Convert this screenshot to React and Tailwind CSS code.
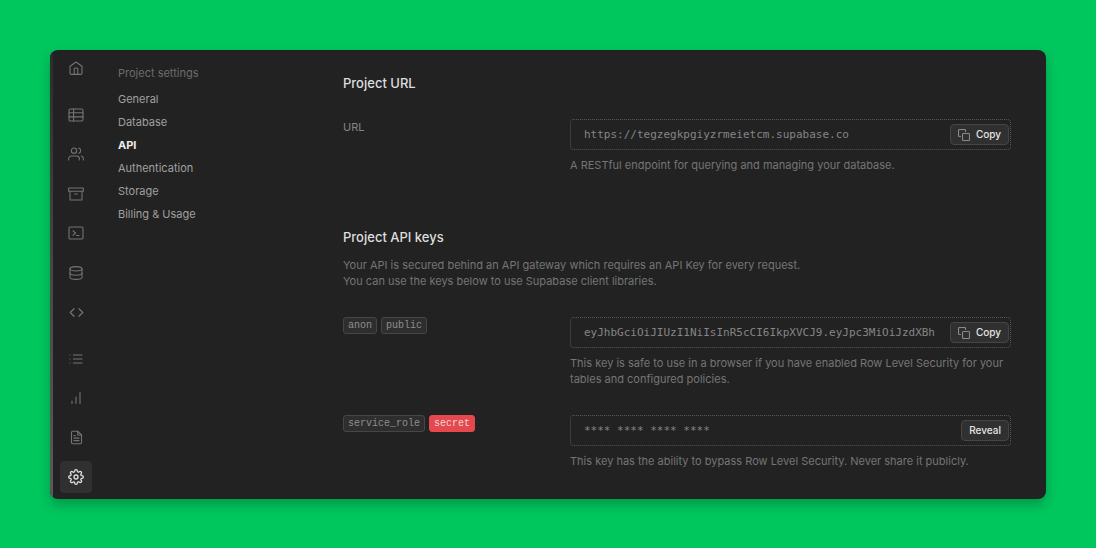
import React from "react";
import { FiArchive, FiCode, FiFileText, FiList, FiSettings, FiUsers } from "react-icons/fi";

const stroke = {
  width: 16,
  height: 16,
  viewBox: "0 0 16 16",
  fill: "none",
  stroke: "currentColor",
  strokeWidth: 1.1,
  strokeLinecap: "round",
  strokeLinejoin: "round",
  "aria-hidden": true,
};

const HomeIcon = () => (
  <svg {...stroke}>
    <path d="M2 6.300 8 2l6 4.300v6.900a1.200 1.200 0 0 1-1.200 1.200H3.200A1.200 1.200 0 0 1 2 13.200Z" />
    <path d="M6.200 14.400V9a1 1 0 0 1 1-1h1.600a1 1 0 0 1 1 1v5.400" />
  </svg>
);

const TableIcon = () => (
  <svg {...stroke}>
    <rect x="1" y="2" width="14" height="12" rx="1.2" />
    <path d="M1 5.800h14M1 9.900h14M5.600 2v12" />
  </svg>
);

const TerminalIcon = () => (
  <svg {...stroke}>
    <rect x="1" y="2" width="14" height="12" rx="1.2" />
    <path d="M5 5.800 7.500 8 5 10.300M8.500 10.500h2.500" />
  </svg>
);

const DatabaseIcon = () => (
  <svg {...stroke}>
    <ellipse cx="8" cy="3.800" rx="6" ry="2.200" />
    <path d="M2 3.800v8.400c0 1.200 2.700 2.200 6 2.200s6-1 6-2.200V3.800" />
    <path d="M2 8c0 1.200 2.700 2.200 6 2.200s6-1 6-2.200" />
  </svg>
);

const ChartIcon = () => (
  <svg {...stroke}>
    <path d="M4 13.500v-2.500M8 13.500V7M12 13.500V2.500" />
  </svg>
);

const CopyIcon = () => (
  <svg {...stroke} width="12" height="12" viewBox="0 0 12 12">
    <rect x="4.500" y="4.500" width="7" height="7" rx="1" />
    <path d="M2.500 7.500h-1a1 1 0 0 1-1-1v-5a1 1 0 0 1 1-1h5a1 1 0 0 1 1 1v1" />
  </svg>
);

const NAV = [
  { name: "Home", icon: <HomeIcon /> },
  { name: "Table editor", icon: <TableIcon />, first: true },
  { name: "Authentication", icon: <FiUsers size={16} strokeWidth={1.6} /> },
  { name: "Storage", icon: <FiArchive size={16} strokeWidth={1.6} /> },
  { name: "SQL editor", icon: <TerminalIcon /> },
  { name: "Database", icon: <DatabaseIcon /> },
  { name: "Functions", icon: <FiCode size={15} strokeWidth={1.9} /> },
  { name: "Logs", icon: <FiList size={16} strokeWidth={1.6} />, first: true },
  { name: "Reports", icon: <ChartIcon /> },
  { name: "API docs", icon: <FiFileText size={15} strokeWidth={1.8} /> },
  { name: "Settings", icon: <FiSettings size={16} strokeWidth={2} />, active: true },
];

const MENU = ["General", "Database", "API", "Authentication", "Storage", "Billing & Usage"];

function Tag({ children, danger }) {
  return (
    <code
      className={
        "rounded-[3px] border px-1 font-['Liberation_Mono',monospace] text-[10px] leading-[15px] " +
        (danger
          ? "border-[#e5484d] bg-[#e5484d] text-[#f3d6d6]"
          : "border-[#464646] bg-[#2e2e2e] text-[#8e8e8e]")
      }
    >
      {children}
    </code>
  );
}

function Field({ id, label, value, help, action, copy }) {
  return (
    <div className="flex items-start">
      <label htmlFor={id} className="flex w-[227px] shrink-0 gap-1">
        {label}
      </label>
      <div className="min-w-0 flex-1">
        <div className="flex h-[31px] items-center rounded-[4px] border border-dotted border-[#585858] pr-px pl-[13px]">
          <input
            id={id}
            readOnly
            value={value}
            className="min-w-0 flex-1 bg-transparent font-['DejaVu_Sans_Mono',monospace] text-[11px] leading-4 text-[#858585] outline-none"
          />
          <button
            type="button"
            className="flex h-[21px] items-center gap-[6px] rounded-[4px] border border-[#454545] bg-[#303030] px-[7px] text-[10px] font-medium text-[#e4e4e4]"
          >
            {copy && (
              <span className="text-[#8a8a8a]">
                <CopyIcon />
              </span>
            )}
            {action}
          </button>
        </div>
        <p className="mt-[7px] text-[11px] leading-4 text-[#757575]">{help}</p>
      </div>
    </div>
  );
}

export default function App() {
  return (
    <div className="min-h-screen bg-[#00c65e] p-[50px] font-[Inter,sans-serif]">
      <div className="flex overflow-hidden rounded-lg bg-[#222222] shadow-[0_6px_12px_rgba(0,0,0,0.22)]">
        <div className="w-[3px] shrink-0 bg-linear-to-b from-[#2c2c2c] via-[#484848] to-[#5a5a5a]" />
        <nav className="flex flex-col justify-between px-[7px] pt-[2px] pb-[6px]">
          {NAV.map((item) => (
            <a
              key={item.name}
              href="#"
              aria-label={item.name}
              className={
                "flex size-8 items-center justify-center rounded-[4px] " +
                (item.active ? "bg-[#303030] text-[#dedede] " : "text-[#747474] ") +
                (item.first ? "mt-[7px]" : "")
              }
            >
              {item.icon}
            </a>
          ))}
        </nav>
        <aside className="w-[244px] shrink-0 pt-3 pl-[19px] text-[11px] leading-[23px] text-[#a0a0a0]">
          <h2 className="mb-[3px] text-[#6c6c6c]">Project settings</h2>
          <ul>
            {MENU.map((name) => (
              <li key={name}>
                <a href="#" className={name === "API" ? "font-bold text-[#ededed]" : ""}>
                  {name}
                </a>
              </li>
            ))}
          </ul>
        </aside>
        <main className="min-w-0 flex-1 pt-[23px] pr-[35px] pb-[30px]">
          <h3 className="text-[13px] leading-5 font-medium text-[#dedede]">Project URL</h3>
          <div className="mt-[26px]">
            <Field
              id="url"
              label={<span className="text-[11px] leading-4 text-[#858585]">URL</span>}
              value="https://tegzegkpgiyzrmeietcm.supabase.co"
              help="A RESTful endpoint for querying and managing your database."
              action="Copy"
              copy
            />
          </div>
          <h3 className="mt-[54px] text-[13px] leading-5 font-medium text-[#dedede]">
            Project API keys
          </h3>
          <p className="mt-[10px] text-[11px] leading-4 text-[#757575]">
            Your API is secured behind an API gateway which requires an API Key for every request.
            <br />
            You can use the keys below to use Supabase client libraries.
          </p>
          <div className="mt-7 flex flex-col gap-7">
            <Field
              id="anon"
              label={
                <>
                  <Tag>anon</Tag>
                  <Tag>public</Tag>
                </>
              }
              value="eyJhbGciOiJIUzI1NiIsInR5cCI6IkpXVCJ9.eyJpc3MiOiJzdXBh"
              help="This key is safe to use in a browser if you have enabled Row Level Security for your tables and configured policies."
              action="Copy"
              copy
            />
            <Field
              id="service"
              label={
                <>
                  <Tag>service_role</Tag>
                  <Tag danger>secret</Tag>
                </>
              }
              value="**** **** **** ****"
              help="This key has the ability to bypass Row Level Security. Never share it publicly."
              action="Reveal"
            />
          </div>
        </main>
      </div>
    </div>
  );
}
